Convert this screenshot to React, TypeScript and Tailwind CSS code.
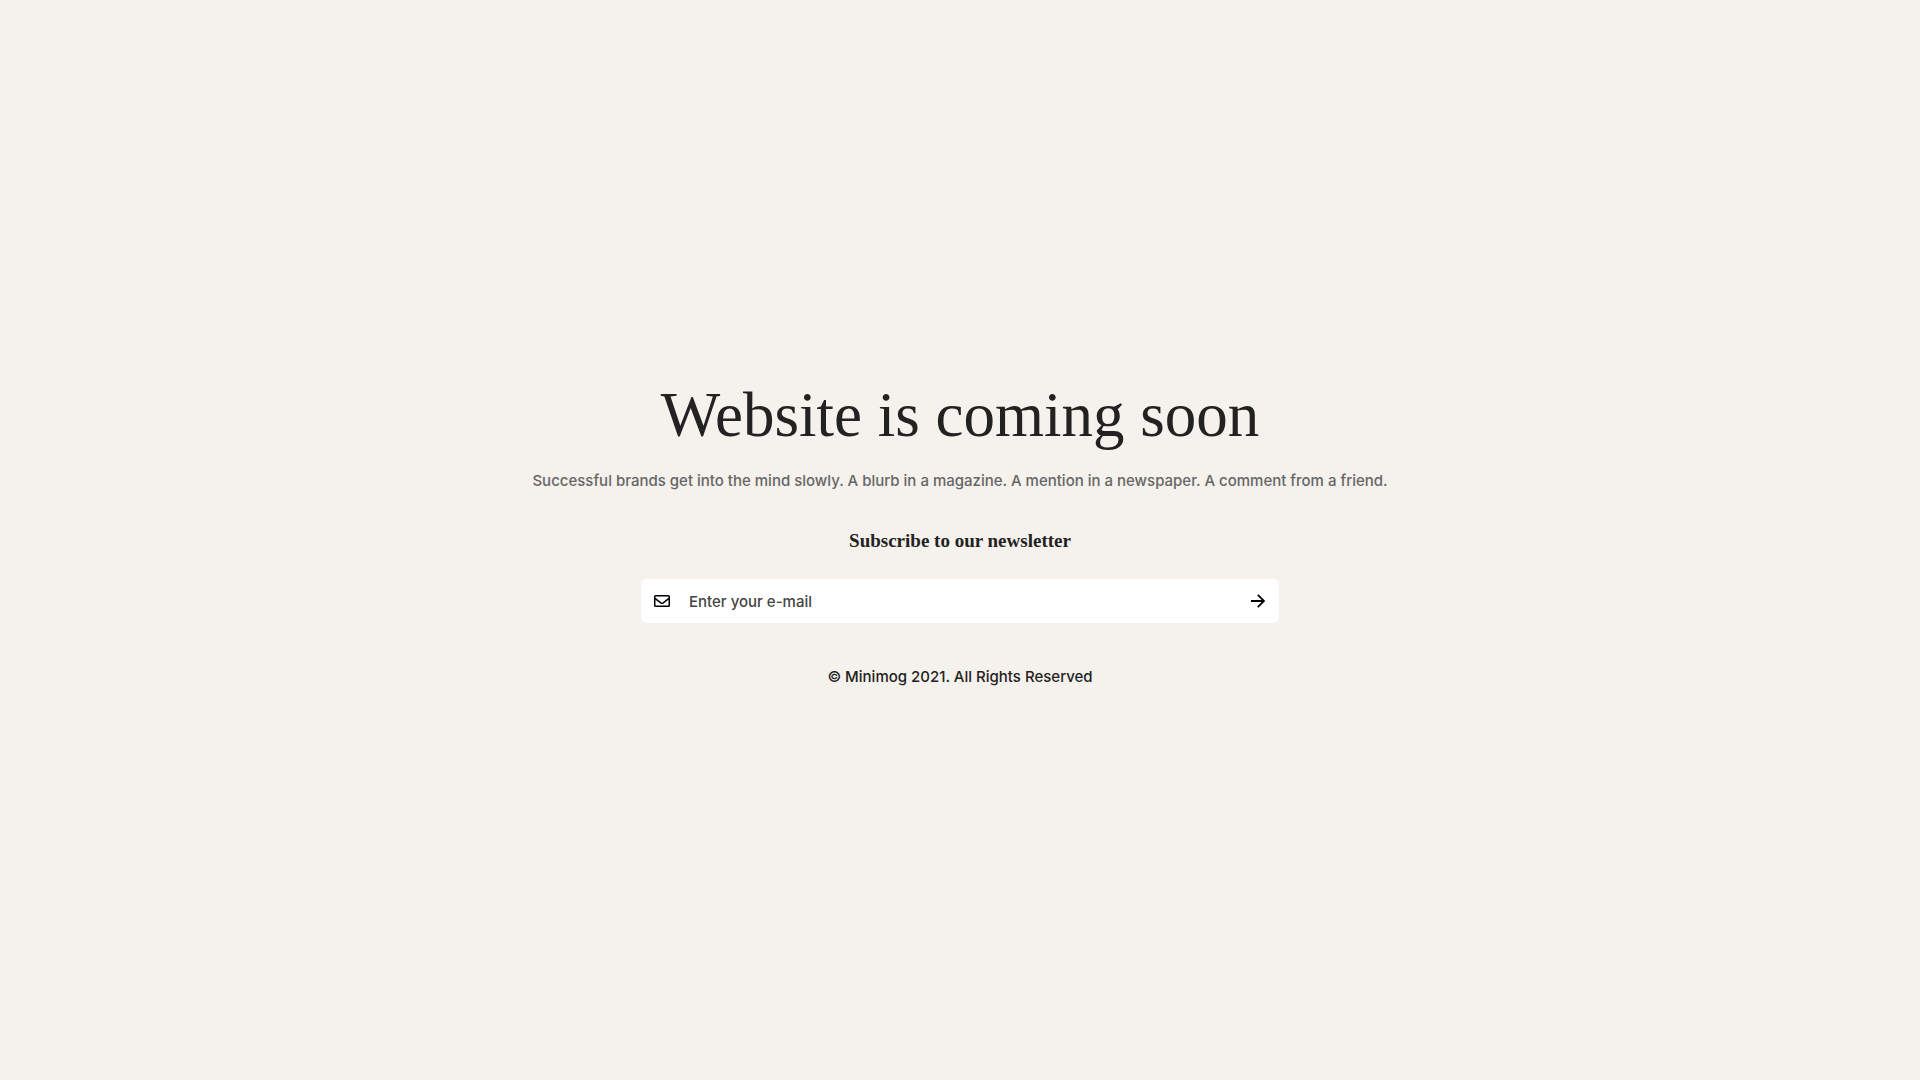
import { useState, type FormEvent } from "react";

function MailIcon() {
  return (
    <svg width="16" height="12" viewBox="0 0 16 12" fill="none" stroke="currentColor" aria-hidden="true">
      <rect x="0.75" y="0.75" width="14.5" height="10.5" rx="0.8" strokeWidth="1.5" />
      <path d="M1 3.4 L6.8 7.8 Q8 8.6 9.2 7.8 L15 3.4" strokeWidth="1.5" />
    </svg>
  );
}

function ArrowIcon() {
  return (
    <svg width="14" height="14" viewBox="0 0 14 14" fill="none" stroke="currentColor" aria-hidden="true">
      <path d="M0 7 H13 M6.8 0.8 L13 7 L6.8 13.2" strokeWidth="1.8" />
    </svg>
  );
}

function NewsletterForm() {
  const [email, setEmail] = useState("");

  function submit(e: FormEvent) {
    e.preventDefault();
    setEmail("");
  }

  return (
    <form
      onSubmit={submit}
      className="flex h-11 w-full max-w-[638px] items-center rounded-[5px] bg-white text-black"
    >
      <label htmlFor="email" className="pr-[19px] pl-[13px]" aria-label="E-mail">
        <MailIcon />
      </label>
      <input
        id="email"
        type="email"
        value={email}
        onChange={(e) => setEmail(e.target.value)}
        placeholder="Enter your e-mail"
        className="h-full min-w-0 flex-1 bg-transparent text-[15px] font-medium text-[#222] outline-none placeholder:text-[#444]"
      />
      <button type="submit" aria-label="Subscribe" className="px-[14px] py-3">
        <ArrowIcon />
      </button>
    </form>
  );
}

export default function App() {
  return (
    <main className="flex min-h-screen flex-col items-center justify-center bg-[#f5f1ec] px-4 pb-4 text-center font-['Inter',sans-serif] text-[#222]">
      <h1 className="font-['Liberation_Serif',serif] text-[63px] leading-[80px]">
        Website is coming soon
      </h1>
      <p className="mt-[14px] text-[15px] leading-6 font-medium text-[#666]">
        Successful brands get into the mind slowly. A blurb in a magazine. A mention in a newspaper. A
        comment from a friend.
      </p>
      <h2 className="mt-[34px] mb-6 font-['Liberation_Serif',serif] text-[19px] leading-7 font-bold">
        Subscribe to our newsletter
      </h2>
      <NewsletterForm />
      <footer className="mt-[42px] text-[15px] leading-6 font-medium">
        © Minimog 2021. All Rights Reserved
      </footer>
    </main>
  );
}
